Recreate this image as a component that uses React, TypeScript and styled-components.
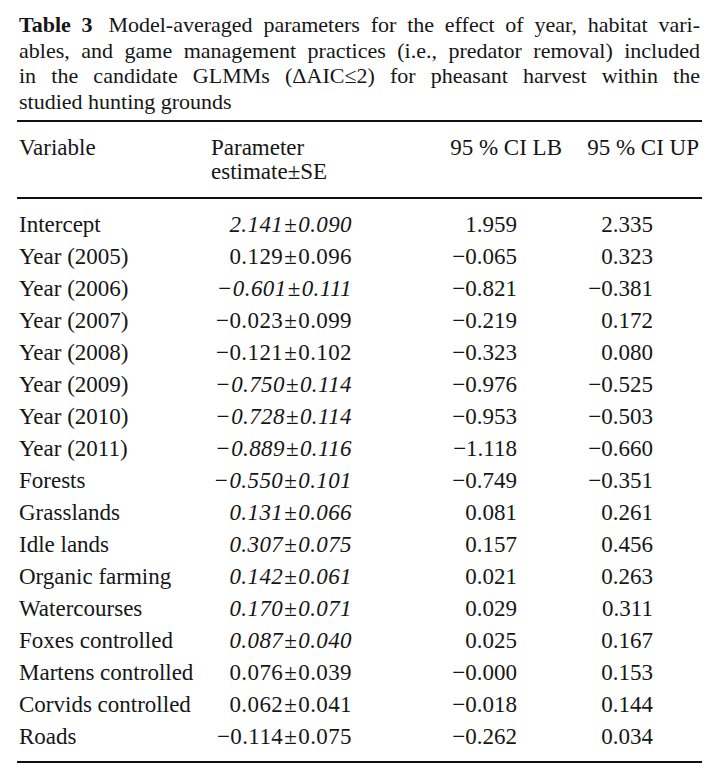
import React from "react";
import styled, { createGlobalStyle } from "styled-components";

const Global = createGlobalStyle`
  html, body { margin: 0; padding: 0; background: #fff; }
  body { font-family: "Liberation Serif", "Times New Roman", serif; color: #161616; }
`;

const Page = styled.div`
  width: 719px;
  padding: 12px 17px 0 17px;
  box-sizing: border-box;
`;

const Caption = styled.div`
  font-size: 22px;
  line-height: 25.5px;
  padding: 0 2px 0 2px;
  margin-bottom: 6px;
`;

const CaptionLine = styled.div<{ $last?: boolean }>`
  text-align: ${(p) => (p.$last ? "left" : "justify")};
  text-align-last: ${(p) => (p.$last ? "left" : "justify")};
  white-space: nowrap;
`;

const Label = styled.b`
  font-weight: bold;
  margin-right: 5px;
`;

const Table = styled.div`
  display: grid;
  grid-template-columns: 188px 155px 205px 137px;
  font-size: 23px;
  border-top: 2px solid #111;
  border-bottom: 2px solid #111;
`;

const HeadRow = styled.div`
  display: contents;
`;

const HeadCell = styled.div<{ $align?: "left" | "right"; $pad?: number }>`
  text-align: ${(p) => p.$align || "left"};
  padding: 14px ${(p) => (p.$align === "right" ? `${p.$pad ?? 3}px` : "0")} 13px
    ${(p) => (p.$align === "right" ? "0" : `${p.$pad ?? 2}px`)};
  line-height: 24px;
  border-bottom: 2px solid #111;
  white-space: nowrap;
`;

const Cell = styled.div<{ $align?: "left" | "right"; $pad?: number; $italic?: boolean; $first?: boolean; $last?: boolean }>`
  text-align: ${(p) => p.$align || "left"};
  font-style: ${(p) => (p.$italic ? "italic" : "normal")};
  line-height: 32px;
  padding-left: ${(p) => (p.$align === "right" ? 0 : p.$pad ?? 2)}px;
  padding-right: ${(p) => (p.$align === "right" ? p.$pad ?? 0 : 0)}px;
  padding-top: ${(p) => (p.$first ? 10 : 0)}px;
  padding-bottom: ${(p) => (p.$last ? 8 : 0)}px;
  white-space: nowrap;
`;

const EstimateText = styled.span`
  letter-spacing: 0.4px;
`;

const PlusMinus = styled.span`
  font-style: normal;
  margin: 0 1px;
`;

type Row = [string, string, boolean, string, string];

const rows: Row[] = [
  ["Intercept", "2.141±0.090", true, "1.959", "2.335"],
  ["Year (2005)", "0.129±0.096", false, "−0.065", "0.323"],
  ["Year (2006)", "−0.601±0.111", true, "−0.821", "−0.381"],
  ["Year (2007)", "−0.023±0.099", false, "−0.219", "0.172"],
  ["Year (2008)", "−0.121±0.102", false, "−0.323", "0.080"],
  ["Year (2009)", "−0.750±0.114", true, "−0.976", "−0.525"],
  ["Year (2010)", "−0.728±0.114", true, "−0.953", "−0.503"],
  ["Year (2011)", "−0.889±0.116", true, "−1.118", "−0.660"],
  ["Forests", "−0.550±0.101", true, "−0.749", "−0.351"],
  ["Grasslands", "0.131±0.066", true, "0.081", "0.261"],
  ["Idle lands", "0.307±0.075", true, "0.157", "0.456"],
  ["Organic farming", "0.142±0.061", true, "0.021", "0.263"],
  ["Watercourses", "0.170±0.071", true, "0.029", "0.311"],
  ["Foxes controlled", "0.087±0.040", true, "0.025", "0.167"],
  ["Martens controlled", "0.076±0.039", false, "−0.000", "0.153"],
  ["Corvids controlled", "0.062±0.041", false, "−0.018", "0.144"],
  ["Roads", "−0.114±0.075", false, "−0.262", "0.034"],
];

function Estimate({ text }: { text: string }) {
  const [est, se] = text.split("±");
  return (
    <EstimateText>
      {est}
      <PlusMinus>±</PlusMinus>
      {se}
    </EstimateText>
  );
}

export default function App() {
  return (
    <>
      <Global />
      <Page>
        <Caption>
          <CaptionLine>
            <Label>Table 3</Label> Model-averaged parameters for the effect of year, habitat vari-
          </CaptionLine>
          <CaptionLine>ables, and game management practices (i.e., predator removal) included</CaptionLine>
          <CaptionLine>in the candidate GLMMs (ΔAIC≤2) for pheasant harvest within the</CaptionLine>
          <CaptionLine $last>studied hunting grounds</CaptionLine>
        </Caption>
        <Table>
          <HeadRow>
            <HeadCell>Variable</HeadCell>
            <HeadCell $pad={6}>
              Parameter
              <br />
              estimate±SE
            </HeadCell>
            <HeadCell $align="right" $pad={3}>95 % CI LB</HeadCell>
            <HeadCell $align="right" $pad={3}>95 % CI UP</HeadCell>
          </HeadRow>
          {rows.map((r, i) => {
            const first = i === 0;
            const last = i === rows.length - 1;
            return (
              <React.Fragment key={r[0]}>
                <Cell $first={first} $last={last}>{r[0]}</Cell>
                <Cell $align="right" $pad={8} $italic={r[2]} $first={first} $last={last}>
                  <Estimate text={r[1]} />
                </Cell>
                <Cell $align="right" $pad={48} $first={first} $last={last}>{r[3]}</Cell>
                <Cell $align="right" $pad={49} $first={first} $last={last}>{r[4]}</Cell>
              </React.Fragment>
            );
          })}
        </Table>
      </Page>
    </>
  );
}
